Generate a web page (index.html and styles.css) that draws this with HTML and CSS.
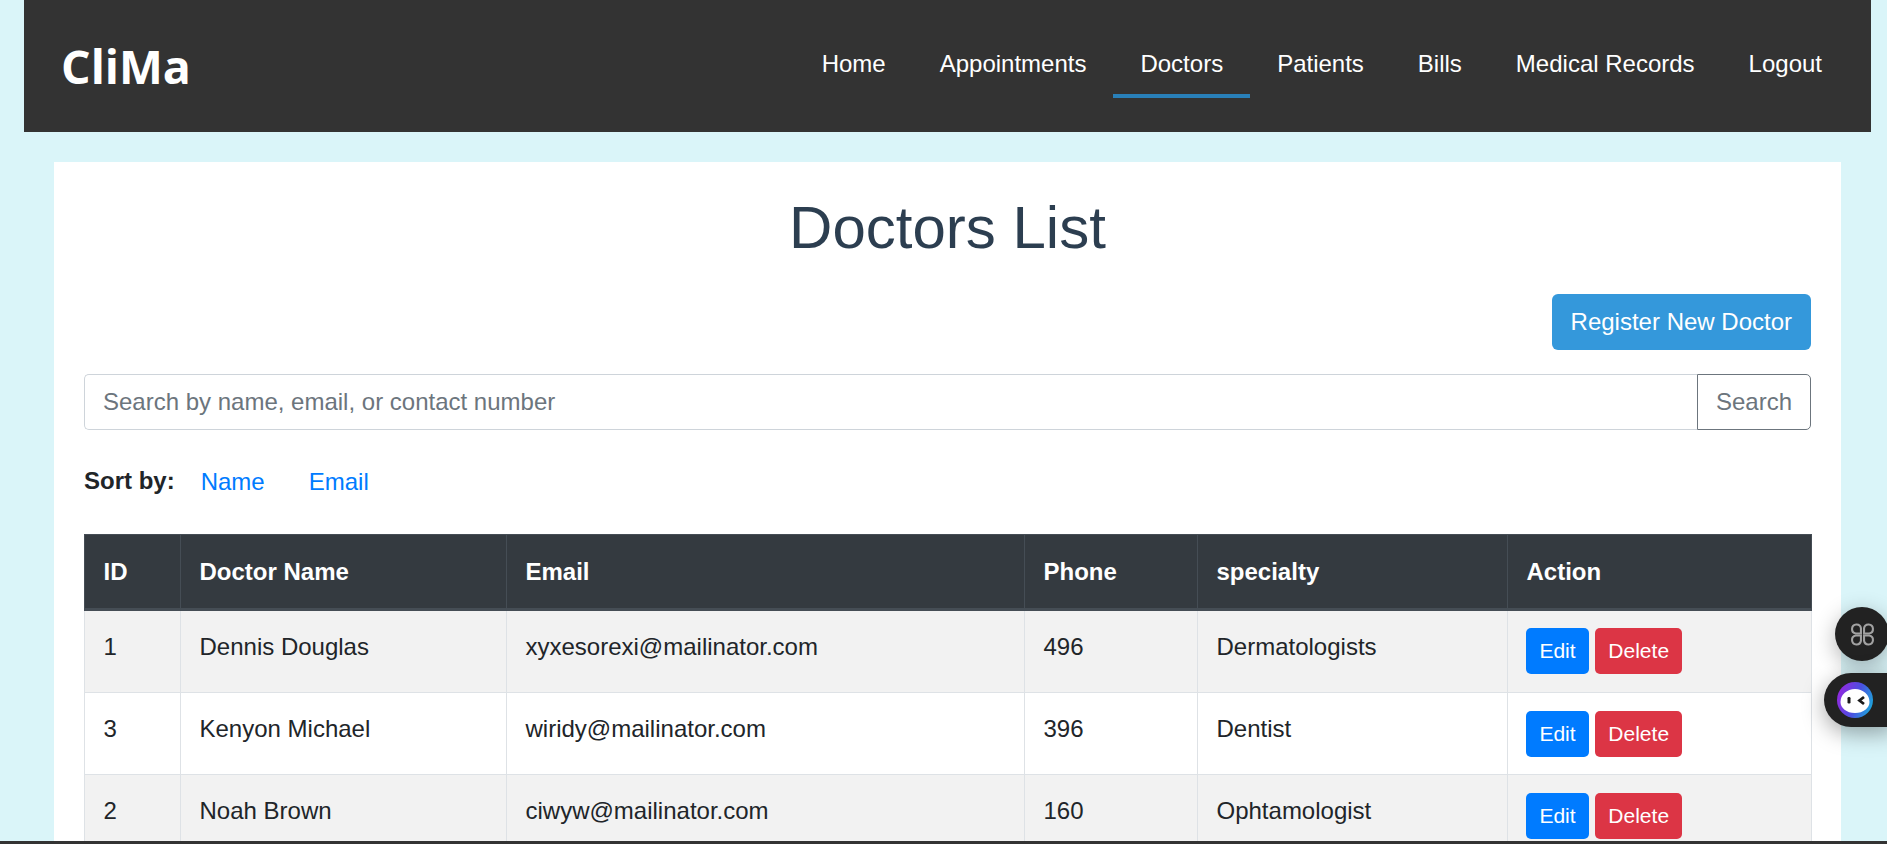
FILE: index.html
```html
<!DOCTYPE html>
<html lang="en">
<head>
<meta charset="utf-8">
<title>Doctors List</title>
<link rel="stylesheet" href="styles.css">
</head>
<body>
<header class="topbar">
  <div class="logo">CliMa</div>
  <nav class="nav">
    <a href="#">Home</a>
    <a href="#">Appointments</a>
    <a href="#" class="active">Doctors</a>
    <a href="#">Patients</a>
    <a href="#">Bills</a>
    <a href="#">Medical Records</a>
    <a href="#">Logout</a>
  </nav>
</header>
<main class="panel">
  <h1>Doctors List</h1>
  <div class="actions"><a href="#" class="btn-register">Register New Doctor</a></div>
  <form class="search">
    <input type="text" placeholder="Search by name, email, or contact number">
    <button type="button">Search</button>
  </form>
  <div class="sort">
    <strong>Sort by:</strong>
    <a href="#">Name</a>
    <a href="#">Email</a>
  </div>
  <table>
    <colgroup>
      <col class="c1"><col class="c2"><col class="c3"><col class="c4"><col class="c5"><col class="c6">
    </colgroup>
    <thead>
      <tr><th>ID</th><th>Doctor Name</th><th>Email</th><th>Phone</th><th>specialty</th><th>Action</th></tr>
    </thead>
    <tbody>
      <tr>
        <td>1</td><td>Dennis Douglas</td><td>xyxesorexi@mailinator.com</td><td>496</td><td>Dermatologists</td>
        <td class="row-actions"><a href="#" class="btn edit">Edit</a><a href="#" class="btn del">Delete</a></td>
      </tr>
      <tr>
        <td>3</td><td>Kenyon Michael</td><td>wiridy@mailinator.com</td><td>396</td><td>Dentist</td>
        <td class="row-actions"><a href="#" class="btn edit">Edit</a><a href="#" class="btn del">Delete</a></td>
      </tr>
      <tr>
        <td>2</td><td>Noah Brown</td><td>ciwyw@mailinator.com</td><td>160</td><td>Ophtamologist</td>
        <td class="row-actions"><a href="#" class="btn edit">Edit</a><a href="#" class="btn del">Delete</a></td>
      </tr>
    </tbody>
  </table>
</main>
<div class="float-apps">
  <svg width="25" height="23" viewBox="0 0 24 22" fill="none" stroke="#a2a2a2" stroke-width="2">
    <path d="M10.500 10H5.500a4.300 4.300 0 1 1 5-5z"/>
    <path d="M13.500 10h5a4.300 4.300 0 1 0-5-5z"/>
    <path d="M10.500 12H5.500a4.300 4.300 0 1 0 5 5z"/>
    <path d="M13.500 12h5a4.300 4.300 0 1 1-5 5z"/>
  </svg>
</div>
<div class="float-bot">
  <svg width="36" height="36" viewBox="0 0 36 36">
    <defs>
      <linearGradient id="ring" x1="0" y1="0.45" x2="1" y2="0.8">
        <stop offset="0" stop-color="#8f2be0"/>
        <stop offset="0.5" stop-color="#4a4fe0"/>
        <stop offset="1" stop-color="#18b0dc"/>
      </linearGradient>
    </defs>
    <circle cx="18" cy="18" r="18" fill="url(#ring)"/>
    <path d="M3.500 20a14.500 13 0 0 1 29 0c0 6-6 11-14.500 11S3.500 26 3.500 20z" fill="#fff"/>
    <rect x="10.500" y="15" width="3" height="6.500" rx="1.200" fill="#1a1a1a"/>
    <path d="M27 15l-4.500 3.500L27 22" fill="none" stroke="#1a1a1a" stroke-width="2.800"/>
  </svg>
</div>
<div class="screen-edge"></div>
</body>
</html>
```
FILE: styles.css
```css
* { box-sizing: border-box; }
html { height: 100%; overflow: hidden; }
body {
  height: 100vh;
  overflow: hidden;
  margin: 0;
  padding: 0 16px 0 24px;
  display: flex;
  flex-direction: column;
  background: #daf5f9;
  font-family: "Liberation Sans", Arial, sans-serif;
  font-size: 24px;
  color: #212529;
}
a { text-decoration: none; }

.topbar {
  flex: none;
  height: 132px;
  background: #333;
  display: flex;
  align-items: center;
  justify-content: space-between;
  padding: 0 22px 0 37px;
}
.logo {
  font-family: "Open Sans", sans-serif;
  font-weight: 700;
  font-size: 46.5px;
  color: #fff;
}
.nav { display: flex; align-self: flex-start; margin-top: 44px; }
.nav a {
  color: #fff;
  font-size: 24px;
  line-height: 28px;
  padding: 6px 27px 16px;
  border-bottom: 4px solid transparent;
}
.nav a.active { border-bottom-color: #2980b9; }

.panel {
  flex: 1;
  min-height: 0;
  overflow: hidden;
  margin: 30px 30px 0;
  padding: 30px;
  background: #fff;
}
h1 {
  margin: 1px 0 0;
  text-align: center;
  font-size: 60px;
  font-weight: 400;
  line-height: 69px;
  color: #2c3e50;
}
.actions { display: flex; justify-content: flex-end; margin-top: 32px; }
.btn-register {
  background: #3498db;
  color: #fff;
  font-size: 24px;
  line-height: 28px;
  padding: 14px 19px;
  border-radius: 6px;
}
.search { display: flex; height: 56px; margin-top: 24px; }
.search input {
  flex: 1;
  min-width: 0;
  border: 1px solid #ced4da;
  border-right: 0;
  border-radius: 5px 0 0 5px;
  padding: 0 18px;
  font: inherit;
  color: #495057;
  outline: 0;
}
.search input::placeholder { color: #6c757d; opacity: 1; }
.search button {
  width: 114px;
  border: 1px solid #6c757d;
  border-radius: 0 5px 5px 0;
  background: #fff;
  color: #6c757d;
  font: inherit;
}
.sort { display: flex; align-items: center; margin-top: 35px; line-height: 34px; }
.sort strong { color: #212529; font-size: 24px; line-height: 30px; margin-bottom: 3px; }
.sort a { color: #007bff; margin-left: 26px; }
.sort a + a { margin-left: 44px; }

table {
  width: 1727px;
  margin-top: 35px;
  border-collapse: collapse;
  table-layout: fixed;
}
.c1 { width: 96px; }
.c2 { width: 326px; }
.c3 { width: 518px; }
.c4 { width: 173px; }
.c5 { width: 310px; }
.c6 { width: 304px; }
th, td {
  padding: 0 18.5px;
  text-align: left;
  border: 1px solid #dee2e6;
}
th {
  height: 75px;
  background: #343a40;
  color: #fff;
  border-color: #454d55;
  border-bottom-width: 3px;
  font-weight: 700;
}
td { height: 82px; padding-top: 21.5px; vertical-align: top; }
tbody tr:first-child td { height: 83px; }
tbody tr:nth-child(odd) td { background: #f2f2f2; }
td.row-actions { font-size: 0; padding: 18px 18px 0; }
tbody tr:first-child td.row-actions { padding-top: 17px; }
.btn {
  display: inline-block;
  font-size: 21px;
  line-height: 46px;
  height: 46px;
  color: #fff;
  border-radius: 5px;
  padding: 0 13.4px;
  vertical-align: top;
}
.edit { background: #007bff; margin-right: 6px; }
.del { background: #dc3545; }

.float-apps {
  position: fixed;
  left: 1835px;
  top: 607px;
  width: 54px;
  height: 54px;
  border-radius: 50%;
  background: #222;
  box-shadow: 0 6px 22px rgba(0, 0, 0, 0.3);
  display: flex;
  align-items: center;
  justify-content: center;
}
.float-bot {
  position: fixed;
  left: 1824px;
  top: 673px;
  width: 70px;
  height: 54px;
  border-radius: 27px 0 0 27px;
  background: #222;
  box-shadow: 0 6px 22px rgba(0, 0, 0, 0.35);
  padding: 9px 0 0 13px;
}
.float-bot svg { display: block; }
.screen-edge {
  position: fixed;
  left: 0;
  right: 0;
  bottom: 0;
  height: 3px;
  background: #333;
}
```
